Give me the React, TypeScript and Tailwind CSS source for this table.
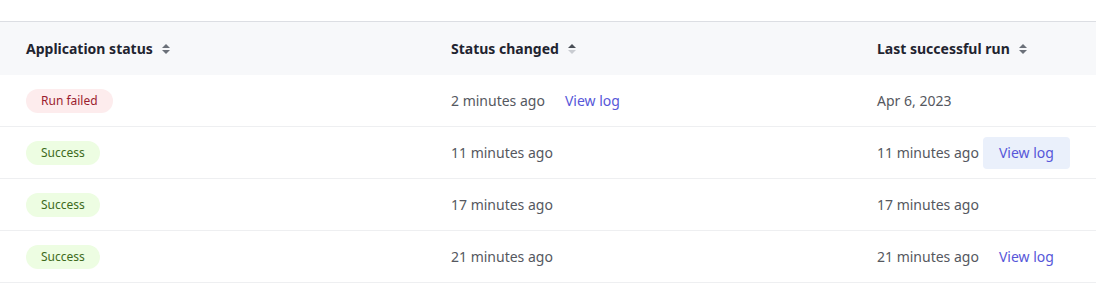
import React from "react";

const SortIcon = ({ active }: { active?: "up" | "down" }) => (
  <svg width="10" height="12" viewBox="0 0 10 12" className="ml-2 shrink-0">
    <path d="M1 5 L5 1 L9 5 Z" fill={active === "up" ? "#4a4f57" : active === "down" ? "#c9ccd1" : "#6b7079"} />
    <path d="M1 7 L5 11 L9 7 Z" fill={active === "down" ? "#4a4f57" : active === "up" ? "#c9ccd1" : "#6b7079"} />
  </svg>
);

const Badge = ({ kind }: { kind: "fail" | "ok" }) =>
  kind === "fail" ? (
    <span className="inline-flex h-6 items-center rounded-full bg-[#fdeced] px-[15px] text-[12px] text-[#9b1c2e]">Run failed</span>
  ) : (
    <span className="inline-flex h-6 items-center rounded-full bg-[#edfde2] px-[15px] text-[12px] text-[#3e6b1c]">Success</span>
  );

const ViewLog = ({ hover }: { hover?: boolean }) => (
  <button
    className={`ml-1 h-8 rounded-[4px] px-4 text-[14px] text-[#5757d9] ${hover ? "bg-[#eaf0fb]" : ""}`}
  >
    View log
  </button>
);

const rows: {
  kind: "fail" | "ok";
  changed: string;
  changedLog?: boolean;
  last: string;
  lastLog?: "plain" | "hover";
}[] = [
  { kind: "fail", changed: "2 minutes ago", changedLog: true, last: "Apr 6, 2023" },
  { kind: "ok", changed: "11 minutes ago", last: "11 minutes ago", lastLog: "hover" },
  { kind: "ok", changed: "17 minutes ago", last: "17 minutes ago" },
  { kind: "ok", changed: "21 minutes ago", last: "21 minutes ago", lastLog: "plain" },
];

export default function App() {
  return (
    <div className="w-[1096px] h-[286px] bg-white font-['Noto_Sans',sans-serif] pt-[21px]">
      <div className="border-t border-[#dcdee3]">
        <div className="grid grid-cols-[425px_426px_245px] h-[53px] bg-[#f7f8fa] text-[14px] font-bold text-[#1f2430] items-center">
          <div className="flex items-center pl-[26px]">
            Application status <SortIcon />
          </div>
          <div className="flex items-center pl-[26px]">
            Status changed <SortIcon active="up" />
          </div>
          <div className="flex items-center pl-[26px]">
            Last successful run <SortIcon />
          </div>
        </div>
        {rows.map((r, i) => (
          <div
            key={i}
            className="grid grid-cols-[425px_426px_245px] h-[52px] border-b border-[#eeeff1] items-center text-[14px] text-[#555860]"
          >
            <div className="pl-[26px] flex items-center">
              <Badge kind={r.kind} />
            </div>
            <div className="pl-[26px] flex items-center">
              <span>{r.changed}</span>
              {r.changedLog && <ViewLog />}
            </div>
            <div className="pl-[26px] flex items-center">
              <span>{r.last}</span>
              {r.lastLog && <ViewLog hover={r.lastLog === "hover"} />}
            </div>
          </div>
        ))}
      </div>
    </div>
  );
}
